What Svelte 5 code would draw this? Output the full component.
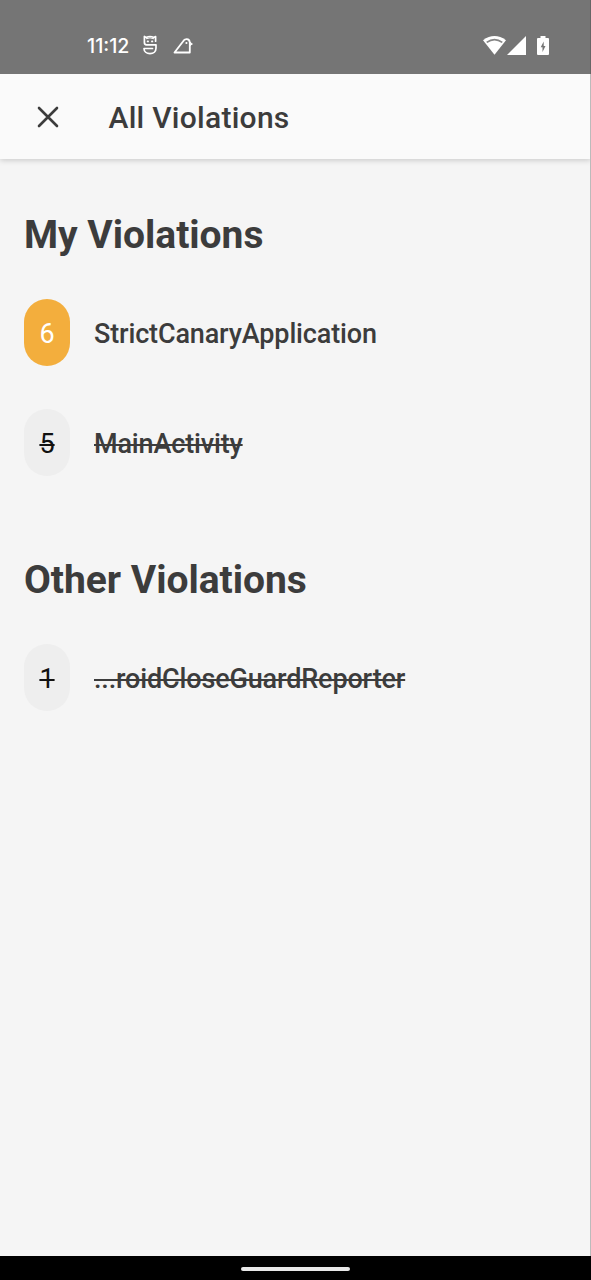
<script>
  const sections = [
    { title: 'My Violations', items: [
      { count: 6, name: 'StrictCanaryApplication', unread: true },
      { count: 5, name: 'MainActivity', unread: false }
    ] },
    { title: 'Other Violations', items: [
      { count: 1, name: '...roidCloseGuardReporter', unread: false }
    ] }
  ];
</script>

<div class="screen">
  <header class="status">
    <span class="clock">11:12</span>
    <svg class="strict" width="16" height="20" viewBox="0 0 16 20" fill="none" stroke="#fff" stroke-width="1.7" stroke-linejoin="round" stroke-linecap="round">
      <path d="M13.6 6.2V1.5L11.8 2.4Q8 .6 4.2 2.4L2.4 1.5V7.5Q2.4 9.8 4.4 9.8H14V13C14 16.5 11.5 18.7 8 18.7S2 16.5 2 13.5H10.5" />
      <path d="M4.4 3.6Q8 1.9 11.6 3.6" stroke-width="1" />
      <path d="M5.6 6.4h.5M9.9 6.4h.5" />
    </svg>
    <svg class="canary" width="21" height="18" viewBox="0 0 21 18" fill="none" stroke="#fff" stroke-width="1.8" stroke-linejoin="round" stroke-linecap="round">
      <path d="M1.5 15.5L10 4.5C11.7 1.2 16.3 1.4 16.8 5.3V15.5Z" />
      <path d="M17.2 5.4L19.4 7L17.2 8.4Z" stroke-width="1" fill="#fff" />
      <path d="M13.3 6h.3" />
    </svg>
    <span class="space"></span>
    <svg class="wifi" width="23" height="19" viewBox="0 0 23 19">
      <path d="M0 4.2Q11.5-4.2 23 4.2L11.5 18.7Z" fill="#fff" />
      <path d="M3.7 6.4Q11.5 .8 19.3 6.4" fill="none" stroke="#858585" stroke-width="1.7" />
    </svg>
    <svg class="signal" width="19" height="19" viewBox="0 0 19 19"><path d="M19 0V19H0Z" fill="#fff" /></svg>
    <svg class="battery" width="12" height="20" viewBox="0 0 12 20">
      <path d="M3.5 0h5v2H11q1 0 1 1V18q0 1-1 1H1q-1 0-1-1V3q0-1 1-1H3.5Z" fill="#fff" />
      <path d="M6.7 5.5L3.7 11.3H5.5V16L8.5 10H6.7Z" fill="#757575" />
    </svg>
  </header>

  <div class="toolbar">
    <svg class="close" width="22" height="22" viewBox="0 0 22 22" fill="none" stroke="#3c3c3c" stroke-width="2.6" stroke-linecap="round"><path d="M2 2L20 20M20 2L2 20" /></svg>
    <h1>All Violations</h1>
  </div>

  <main>
    {#each sections as section}
      <section>
        <h2>{section.title}</h2>
        {#each section.items as item}
          <div class="row" class:read={!item.unread}>
            <span class="badge"><span class="num">{item.count}</span></span>
            <span class="name">{item.name}</span>
          </div>
        {/each}
      </section>
    {/each}
  </main>

  <footer><span class="handle"></span></footer>
</div>

<style>
  .screen {
    box-sizing: border-box;
    width: 591px;
    height: 1280px;
    display: flex;
    flex-direction: column;
    overflow: hidden;
    background: #f5f5f5;
    color: #3c3c3c;
    font-family: Roboto, sans-serif;
  }
  .status {
    box-sizing: border-box;
    height: 74px;
    flex: none;
    display: flex;
    align-items: flex-start;
    padding: 36px 41px 0 87px;
    background: #757575;
    border-right: 1px solid #666;
    z-index: 1;
  }
  .clock {
    width: 55px;
    color: #fff;
    font: 500 19.6px/20px Inter, sans-serif;
    white-space: nowrap;
  }
  .strict { margin-top: -1px; }
  .canary { margin: 1px 0 0 15px; }
  .space { flex: 1; }
  .signal { margin-left: 1px; }
  .battery { margin-left: 11px; }
  .toolbar {
    box-sizing: border-box;
    height: 85px;
    flex: none;
    display: flex;
    align-items: center;
    padding: 0 0 0 37px;
    background: #fafafa;
    border-right: 1px solid #bbb;
    box-shadow: 0 1px 6px rgba(0, 0, 0, .2);
  }
  h1 {
    margin: 3px 0 0 49.5px;
    font-size: 30px;
    line-height: 36px;
    font-weight: 500;
    letter-spacing: .27px;
  }
  main {
    flex: 1;
    padding: 48px 24px 0;
    border-right: 1px solid #bbb;
  }
  section { margin-bottom: 76px; }
  h2 {
    margin: 0 0 36px;
    font-size: 39px;
    line-height: 56px;
    font-weight: 700;
    letter-spacing: -.04px;
  }
  .row {
    display: flex;
    align-items: center;
    height: 67px;
    margin-bottom: 43px;
  }
  .badge {
    width: 46px;
    height: 67px;
    border-radius: 23px;
    display: flex;
    align-items: center;
    justify-content: center;
    background: #f3ae3d;
    color: #fff;
    font-size: 27px;
  }
  .name {
    margin-left: 24px;
    font-size: 27px;
    font-weight: 500;
    letter-spacing: -.15px;
    white-space: nowrap;
  }
  .num, .name { line-height: 32px; padding-top: 2px; }
  .read .badge { background: #eee; color: #111; }
  .read .num, .read .name { text-decoration: line-through; text-decoration-thickness: 1.5px; }
  footer {
    height: 24px;
    flex: none;
    display: flex;
    align-items: center;
    justify-content: center;
    background: #000;
  }
  .handle { width: 109px; height: 4px; margin-top: 2px; border-radius: 2px; background: #e8e8e8; }
</style>
